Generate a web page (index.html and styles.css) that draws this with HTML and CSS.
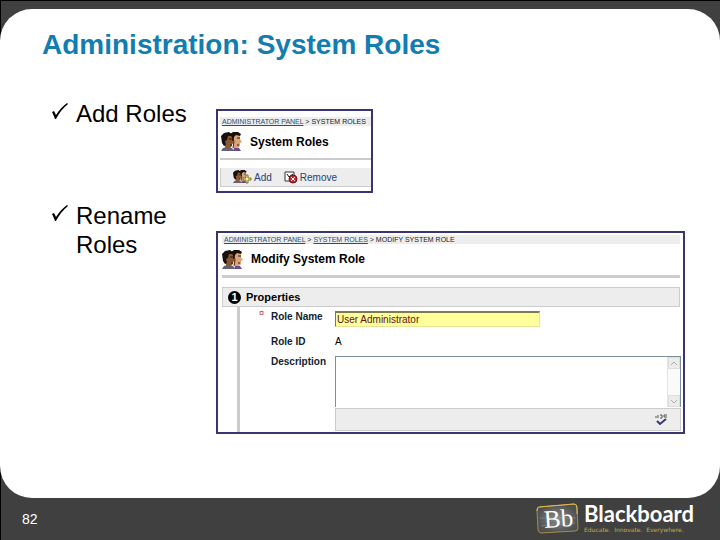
FILE: index.html
```
<!DOCTYPE html>
<html lang="en">
<head>
  <meta charset="UTF-8" />
  <meta name="viewport" content="width=device-width, initial-scale=1.0" />
  <title>Administration: System Roles</title>
  <link rel="stylesheet" href="styles.css">
</head>
<body>
  <svg width="0" height="0" class="defs" aria-hidden="true">
    <symbol id="check" viewBox="0 0 17 17">
      <path d="M1 9 L3 8 L5 12 C8 7 12 3 16 0 L17 1 C12 5 8 10 5 16 L4 16 C3 13 2 11 1 9 Z" />
    </symbol>
    <symbol id="people" viewBox="0 0 22 19">
      <path d="M0 19 L2 16 L5 15 L11 16 L13 19 Z" fill="#5f6478" />
      <path d="M12 19 L13 16 L18 16 L20 19 Z" fill="#6b4b8c" />
      <path d="M11 3 L18 2 L19 5 V7 L21 10 L19 11 V14 L17 16 L12 16 Z" fill="#dca578" />
      <path d="M9 2 L12 0 H17 L20 2 L19 4 L15 3 L13 5 L13 9 L11 9 Z" fill="#17100c" />
      <path d="M3 5 L9 3 L11 5 V8 L13 11 L11 12 V14 L9 16 L5 17 L3 12 Z" fill="#8a5833" />
      <path d="M0 4 L3 1 L8 0 L12 3 L11 4 L7 4 L6 8 L4 9 L5 13 L3 14 L1 11 Z" fill="#17100c" />
      <path d="M8 7 H11 M16 6 H19 M9 13 H11 M16 13 H18" fill="none" stroke="#2c1a10" />
      <path d="M12 6 L13 10 L12 16" fill="none" stroke="#4a2c1a" />
    </symbol>
  </svg>

  <div class="slide">
    <main class="panel">
      <h1>Administration: System Roles</h1>

      <section class="topic">
        <h2><svg class="check"><use href="#check" /></svg>Add Roles</h2>
        <div class="shot shot-small">
          <nav class="crumbs"><a href="#">ADMINISTRATOR PANEL</a> &gt; SYSTEM ROLES</nav>
          <h3><svg class="people"><use href="#people" /></svg>System Roles</h3>
          <hr>
          <div class="actions">
            <button type="button">
              <svg width="19" height="14" viewBox="0 0 19 14">
                <svg width="15" height="13"><use href="#people" /></svg>
                <path d="M13 5 h2 v3 h3 v2 h-3 v3 h-2 v-3 h-3 v-2 h3 Z" fill="#fff0a0" stroke="#77702c" />
              </svg>
              Add
            </button>
            <button type="button">
              <svg width="14" height="14" viewBox="0 0 14 14">
                <path d="M1 2 H10 V11 H1 Z" fill="#fff" stroke="#333" />
                <path d="M3 4 L5 7 L9 4" fill="none" stroke="#111" />
                <circle cx="9" cy="9" r="4" fill="#c32832" stroke="#6d1118" />
                <path d="M7 7 L11 11 M11 7 L7 11" stroke="#fff" />
              </svg>
              Remove
            </button>
          </div>
        </div>
      </section>

      <section class="topic">
        <h2><svg class="check"><use href="#check" /></svg>Rename Roles</h2>
        <div class="shot shot-large">
          <nav class="crumbs"><a href="#">ADMINISTRATOR PANEL</a> &gt; <a href="#">SYSTEM ROLES</a> &gt; MODIFY SYSTEM ROLE</nav>
          <h3><svg class="people"><use href="#people" /></svg>Modify System Role</h3>
          <hr>
          <h4><span class="step">1</span>Properties</h4>
          <form class="fields">
            <span class="required">¤</span>
            <label for="role-name">Role Name</label>
            <input type="text" id="role-name" value="User Administrator" />

            <label for="role-id">Role ID</label>
            <output id="role-id">A</output>

            <label for="description">Description</label>
            <div class="editor">
              <div class="editor-area">
                <textarea id="description"></textarea>
                <div class="scrollbar">
                  <button type="button" aria-label="Scroll up"><svg width="7" height="5" viewBox="0 0 7 5"><path d="M0 4 L3 1 L6 4" /></svg></button>
                  <button type="button" aria-label="Scroll down"><svg width="7" height="5" viewBox="0 0 7 5"><path d="M0 1 L3 4 L6 1" /></svg></button>
                </div>
              </div>
              <div class="editor-tools">
                <button type="button" aria-label="Check spelling">
                  <svg width="13" height="12" viewBox="0 0 13 12" fill="none">
                    <path d="M1 2 V4 M3 1 V4 M5 1 H7 V4 H5 M12 1 H9 V3 H12" stroke="#555" />
                    <path d="M2 7 L5 10 L11 5" stroke="#37377c" stroke-width="2" />
                  </svg>
                </button>
              </div>
            </div>
          </form>
        </div>
      </section>
    </main>

    <footer>
      <span class="page">82</span>
      <div class="brand">
        <svg width="44" height="32" viewBox="0 0 44 32">
          <defs>
            <radialGradient id="slate">
              <stop offset="0" stop-color="#8b8b8b" />
              <stop offset="1" stop-color="#505050" />
            </radialGradient>
          </defs>
          <path d="M3 4 L38 1 Q41 1 41 4 L42 25 Q42 28 39 28 L5 30 Q3 30 2 27 L1 7 Q1 4 3 4 Z" fill="url(#slate)" stroke="#a08e50" />
          <path d="M1 8 Q1 4 3 4 L38 1 Q41 1 41 5 L41 11" fill="none" stroke="#e2bd4c" />
          <path d="M4 15 H40 M5 23 L39 20" stroke="#999" opacity="0.5" />
          <text x="8" y="24" class="bb" transform="rotate(-4 22 16)">Bb</text>
        </svg>
        <div>
          <div class="brand-name">Blackboard</div>
          <div class="tagline">Educate.&nbsp; Innovate.&nbsp; Everywhere.</div>
        </div>
      </div>
    </footer>
  </div>
</body>
</html>
```

FILE: styles.css
```
* {
  box-sizing: border-box;
}

body {
  margin: 0;
  font-family: "Liberation Sans", Arial, sans-serif;
  color: #000;
}

h1, h2, h3, h4 {
  margin: 0;
}

button {
  display: flex;
  align-items: center;
  padding: 0;
  border: none;
  background: none;
  font: inherit;
}

svg {
  flex: none;
}

.defs {
  position: absolute;
}

.slide {
  display: flex;
  flex-direction: column;
  min-height: 100vh;
  padding-top: 8px;
  border-top: 1px solid #000;
  border-left: 1px solid #000;
  background: #404040;
}

.panel {
  flex: 1;
  margin-left: -1px;
  padding: 20px 35px 30px 42px;
  border-radius: 32px;
  background: #fff;
}

h1 {
  margin-bottom: 48px;
  font-size: 28px;
  line-height: 32px;
  color: #117db0;
}

/* bullet on the left, screen on the right */
.topic {
  display: grid;
  grid-template-columns: 164px 1fr;
  gap: 10px;
  align-items: start;
  margin-bottom: 8px;
}

h2 {
  display: flex;
  gap: 8px;
  margin-top: -10px;
  padding-left: 9px;
  font-size: 24px;
  font-weight: normal;
  line-height: 29px;
}

.topic:nth-of-type(2) h2 {
  margin-top: 0;
}

.check {
  width: 17px;
  height: 17px;
  margin-top: 4px;
}

.shot {
  border: 2px solid #39366e;
  font-size: 10px;
}

.shot-small {
  width: 157px;
  padding: 6px 0 4px 2px;
}

.shot-large {
  margin-top: 30px;
  padding: 2px 3px 0 4px;
}

.crumbs {
  height: 9px;
  padding-left: 2px;
  background: #ededed;
  font-size: 7px;
  line-height: 9px;
  white-space: nowrap;
  color: #222;
}

.crumbs a {
  color: #24507c;
}

h3 {
  display: flex;
  align-items: center;
  gap: 7px;
  height: 30px;
  margin-bottom: 1px;
  font-size: 12px;
}

.shot-small h3 {
  height: 31px;
  padding-left: 1px;
}

.people {
  width: 22px;
  height: 19px;
}

hr {
  height: 3px;
  margin: 0 0 9px;
  border: none;
  background: #ccc;
}

.shot-small hr {
  height: 2px;
  margin-bottom: 8px;
}

.actions {
  display: flex;
  gap: 12px;
  height: 19px;
  padding-left: 12px;
  border-left: 1px solid #ccc;
  border-bottom: 1px solid #ccc;
  background: #ededed;
}

.actions button {
  gap: 2px;
  color: #26427a;
}

h4 {
  display: flex;
  align-items: center;
  gap: 5px;
  height: 20px;
  padding-left: 5px;
  border: 1px solid #ccc;
  background: #ededed;
  font-size: 11px;
}

.step {
  width: 13px;
  height: 13px;
  border-radius: 50%;
  background: #000;
  color: #fff;
  line-height: 13px;
  text-align: center;
}

.fields {
  display: grid;
  grid-template-columns: 19px 12px 64px 1fr;
  grid-template-rows: 25px 20px auto;
  margin-left: 15px;
  margin-right: -1px;
  padding-top: 4px;
  border-left: 3px solid #ccc;
}

.fields label {
  grid-column: 3;
  font-weight: bold;
  line-height: 12px;
  color: #123;
}

.fields input,
.fields output,
.editor {
  grid-column: 4;
}

.fields output {
  line-height: 12px;
}

.required {
  grid-column: 2;
  font-size: 9px;
  line-height: 5px;
  color: #c03030;
}

.fields input {
  width: 205px;
  height: 16px;
  padding: 0 1px;
  border: 1px solid #e6e298;
  border-top: 2px solid #7d7a50;
  border-left-color: #7d7a50;
  background: #ffff9c;
  font: inherit;
  color: #611;
}

.editor {
  padding-bottom: 1px;
}

.editor-area {
  display: flex;
  height: 51px;
  margin-bottom: 1px;
  border: 1px solid #7d8f98;
  border-bottom: none;
}

.editor textarea {
  flex: 1;
  min-width: 0;
  padding: 2px;
  border: none;
  resize: none;
  overflow: hidden;
  font: inherit;
}

.scrollbar {
  display: flex;
  flex-direction: column;
  justify-content: space-between;
  width: 13px;
  border-left: 1px solid #e5e5dd;
  background: #fafaf8;
}

.scrollbar button {
  justify-content: center;
  height: 12px;
  border: 1px solid #ddd;
  background: #ecece8;
}

.scrollbar path {
  fill: none;
  stroke: #aaa;
}

.editor-tools {
  display: flex;
  justify-content: flex-end;
  height: 23px;
  padding-right: 12px;
  border: 1px solid #ccc;
  background: #ededed;
}

footer {
  display: flex;
  justify-content: space-between;
  align-items: center;
  height: 42px;
  padding: 0 26px 0 21px;
  color: #fff;
}

.page {
  font-size: 14px;
}

.brand {
  display: flex;
  align-items: center;
  gap: 4px;
}

.bb {
  font-family: "Liberation Serif", serif;
  font-size: 25px;
  fill: #fff;
}

.brand-name {
  font-family: Lato, sans-serif;
  font-size: 22px;
  font-weight: bold;
  line-height: 20px;
}

.tagline {
  padding-top: 2px;
  font-family: "DejaVu Sans", sans-serif;
  font-size: 6px;
  line-height: 8px;
  color: #c9a94c;
}
```
